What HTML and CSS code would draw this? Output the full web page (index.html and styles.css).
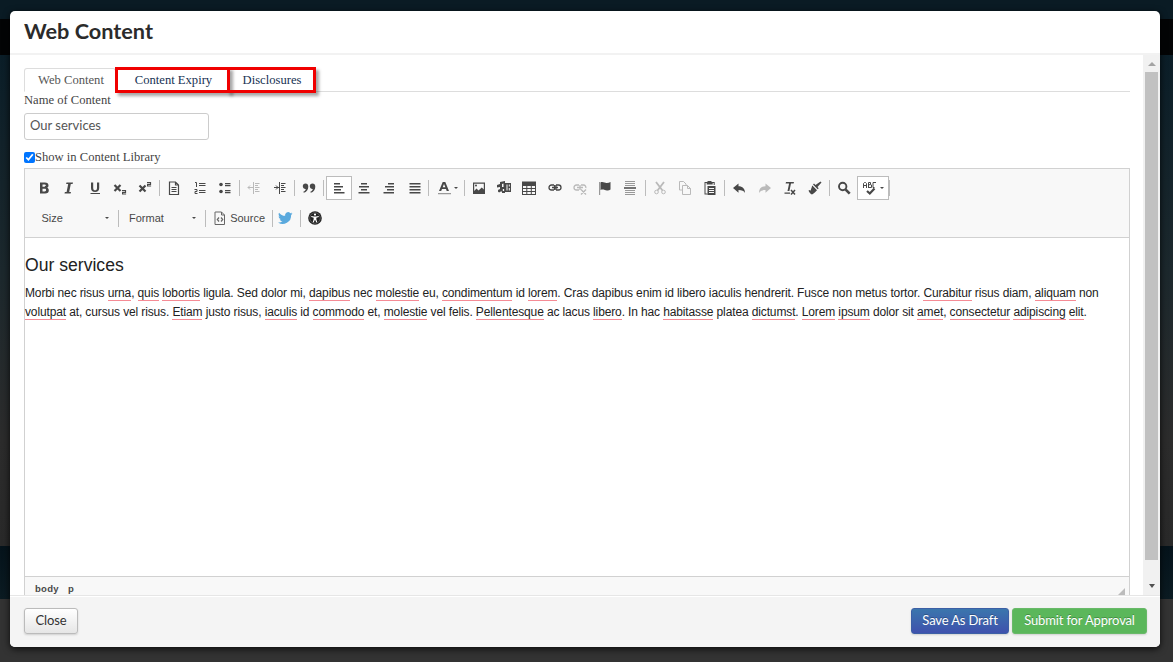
FILE: index.html
```html
<!DOCTYPE html>
<html lang="en">
<head>
  <meta charset="UTF-8">
  <meta name="viewport" content="width=device-width, initial-scale=1.0">
  <title>Web Content</title>
  <link rel="stylesheet" href="styles.css">
</head>
<body>
  <div class="modal">
    <div class="modal-header"><h3>Web Content</h3></div>

    <div class="modal-main">
      <div class="modal-body">
        <ul class="tabs">
          <li class="tab active">Web Content</li>
          <li class="tab marked expiry">Content Expiry</li>
          <li class="tab marked disclosures">Disclosures</li>
        </ul>
        <label class="name-label" for="contentName">Name of Content</label>
        <input class="name-input" id="contentName" type="text" value="Our services">
        <label class="library"><input type="checkbox" checked>Show in Content Library</label>

        <div class="editor">
          <div class="toolbar">
            <div class="row">
              <div class="group">
                <span class="btn"><svg viewBox="0 0 16 16"><path fill-rule="evenodd" d="M4 2.500h4.800c2.600 0 3.700 1.100 3.700 2.900 0 1.200-.6 2-1.500 2.300 1.200.3 1.800 1.200 1.800 2.500 0 2.100-1.200 3.300-3.700 3.300H4zm2.500 2v2.300h1.800c1 0 1.500-.4 1.500-1.200s-.5-1.100-1.500-1.100zm0 4.200v2.700h2.100c1 0 1.500-.5 1.500-1.300 0-.9-.5-1.400-1.500-1.400z"/></svg></span>
                <span class="btn"><svg viewBox="0 0 16 16"><path d="M5.500 2.500h6.500l-.4 1.600h-1.800l-1.600 7.800h1.800l-.4 1.600H3.500l.4-1.600h1.700l1.600-7.800H5.100z"/></svg></span>
                <span class="btn"><svg viewBox="0 0 16 16"><path d="M4 2.500h2.200V8c0 1.700.7 2.300 1.900 2.300S10 9.700 10 8V2.500h2.200V8c0 2.800-1.500 4.100-4.100 4.100S4 10.800 4 8zM3.500 13h9.500v1H3.500z"/></svg></span>
                <span class="btn"><svg class="line" viewBox="0 0 16 16"><path stroke-width="2.200" d="M2.500 5l6 6M8.500 5l-6 6"/><path stroke-width="1.200" d="M10 10.500h3.500v1.800H10.600v1.700h3.500"/></svg></span>
                <span class="btn"><svg class="line" viewBox="0 0 16 16"><path stroke-width="2.200" d="M2.500 5.500l6 6M8.500 5.500l-6 6"/><path stroke-width="1.200" d="M10 2.500h3.500v1.800H10.600V6h3.500"/></svg></span>
              </div>
              <div class="group">
                <span class="btn"><svg class="line" viewBox="0 0 16 16"><path stroke-width="1.200" d="M3.500 2h6l3 3v9.500h-9zM9.500 2v3h3"/><path d="M5.500 7.500h5M5.500 9.500h5M5.500 11.500h5"/></svg></span>
                <span class="btn"><svg class="line" viewBox="0 0 16 16"><path d="M3 2.500h1.500V7M2.500 9.500h2.500v2H3v2h2.500"/><path stroke-width="1.200" d="M7 3.500h6.500M7 5.500h6.500M7 10.500h6.500M7 12.500h6.500"/></svg></span>
                <span class="btn"><svg viewBox="0 0 16 16"><circle cx="4" cy="4.500" r="1.800"/><circle cx="4" cy="11.500" r="1.800"/><path d="M8 3h5.500v1.200H8zM8 5h5.500v1.200H8zM8 10h5.500v1.200H8zM8 12h5.500v1.200H8z"/></svg></span>
              </div>
              <div class="group">
                <span class="btn off"><svg class="line" viewBox="0 0 16 16"><path d="M7.500 2v12M9 3.500h4.500M9 5.500h3M9 7.500h4.500M9 9.500h3M9 11.500h4.500M2 7.500h5M4 5.500l-2 2 2 2"/></svg></span>
                <span class="btn"><svg class="line" viewBox="0 0 16 16"><path d="M8.500 2v12M10 3.500h4.500M10 5.500h3M10 7.500h4.500M10 9.500h3M10 11.500h4.500M3 7.500h5M5 5.500l2 2-2 2"/></svg></span>
              </div>
              <div class="group">
                <span class="btn"><svg viewBox="0 0 16 16"><path d="M4.500 3.500c1.700 0 2.800 1.200 2.800 3.200 0 3-1.700 5.200-4.500 6l-.5-1c1.600-.7 2.400-1.600 2.500-2.800C3 9 1.800 7.800 1.800 6.200c0-1.600 1.100-2.700 2.700-2.700zm7 0c1.700 0 2.800 1.200 2.800 3.200 0 3-1.700 5.200-4.500 6l-.5-1c1.600-.7 2.400-1.600 2.500-2.800-1.800.1-3-1.100-3-2.700 0-1.600 1.100-2.700 2.700-2.700z"/></svg></span>
              </div>
              <div class="group align">
                <span class="btn on"><svg viewBox="0 0 16 16"><path d="M3 3h6v1.600H3zM3 6h9v1.600H3zM3 9h7v1.600H3zM3 12h10.500v1.600H3z"/></svg></span>
                <span class="btn"><svg viewBox="0 0 16 16"><path d="M5 3h6v1.600H5zM3 6h10v1.600H3zM5 9h6v1.600H5zM2.500 12h11v1.600h-11z"/></svg></span>
                <span class="btn"><svg viewBox="0 0 16 16"><path d="M7 3h6v1.600H7zM4 6h9v1.600H4zM6 9h7v1.600H6zM2.500 12H13v1.600H2.500z"/></svg></span>
                <span class="btn"><svg viewBox="0 0 16 16"><path d="M2.500 3h11v1.600h-11zM2.500 6h11v1.600h-11zM2.500 9h11v1.600h-11zM2.500 12h11v1.600h-11z"/></svg></span>
              </div>
              <div class="group">
                <span class="btn wide"><svg viewBox="0 0 16 16"><path fill-rule="evenodd" d="M6.700 2h2.600l3.700 9h-2.300L10 9H6l-.8 2H3zM6.700 7.300h2.700L8 4z"/><path class="soft" d="M2 13h13v1.200H2z"/></svg><i class="caret"></i></span>
              </div>
              <div class="group">
                <span class="btn"><svg viewBox="0 0 16 16"><path fill-rule="evenodd" d="M2 2.500h12v11.500H2zm1.200 1.200v7.300l2.300-2.500 2 2 3.300-3 2 2V3.700z"/><circle cx="5" cy="5.600" r="1"/></svg></span>
                <span class="btn"><svg viewBox="0 0 16 16"><path fill-rule="evenodd" d="M4 2l5-1v2h6v9H9v1H6v-1.500H4.500C4 13 1.500 12.500 2 10.500c.2-1 1-1.300 2-1.300V7L1 7.500V5l3-1zM6 4v3h1.500V3.500zm4.500.5v6h1v-6zM6.800 9v2h1.300V9zm6-4.500v2h1v-2zm0 3.500v2.500h1V8z"/></svg></span>
                <span class="btn"><svg viewBox="0 0 16 16"><path fill-rule="evenodd" d="M1 1.500h14V15H1zm1 4.500v2h3.300V6zm4.300 0v2h3.500V6zm4.500 0v2H14V6zM2 9v2h3.300V9zm4.300 0v2h3.500V9zm4.500 0v2H14V9zM2 12v2h3.300v-2zm4.300 0v2h3.500v-2zm4.500 0v2H14v-2z"/></svg></span>
                <span class="btn"><svg class="line" viewBox="0 0 16 16"><path stroke-width="1.300" d="M7 5H4.500a2.500 2.500 0 000 5H7M9 5h2.500a2.500 2.500 0 010 5H9M5 7.500h6M7.500 5v5M9 5v5"/></svg></span>
                <span class="btn off"><svg class="line" viewBox="0 0 16 16"><path stroke-width="1.300" d="M7 5H4.500a2.500 2.500 0 000 5H7M9 5h2.500a2.500 2.500 0 012.300 3M5 7.500h6M8 5v5M9 9.500l5 5M14 9.500l-5 5"/></svg></span>
                <span class="btn"><svg viewBox="0 0 16 16"><path class="soft" d="M2 2h1.200v13H2z"/><path d="M3.500 2.500c2.500-1.200 4.500.8 6.300.6 1.300-.1 2.700-.6 3.700-1.100v7.500c-1 .8-2.300 1.200-3.600 1-2-.3-3.900-1.600-6.400-.5z"/></svg></span>
                <span class="btn"><svg viewBox="0 0 16 16"><path class="soft" d="M3 1h10v1H3zM3 3h10v1H3zM3 5h10v1H3zM3 10h10v1H3zM3 12h10v1H3zM3 14h10v1H3z"/><path d="M2 7.200h12v1.600H2z"/></svg></span>
              </div>
              <div class="group">
                <span class="btn off"><svg class="line" viewBox="0 0 16 16"><path stroke-width="1.800" d="M4 2l6.500 8.500M12 2l-6.500 8.500"/><circle cx="4.500" cy="12" r="1.800"/><circle cx="11.500" cy="12" r="1.800"/></svg></span>
                <span class="btn off"><svg class="line" viewBox="0 0 16 16"><path d="M5 10H2.500V1.500h4L9 4v1M5.500 5.500h5l3 3v6h-8zM10.500 5.500v3h3"/></svg></span>
                <span class="btn"><svg viewBox="0 0 16 16"><path d="M2.500 2h3V1h4v1h3.200v3h-1V3h-1v1.500h-6V3h-1.200v10.500H5.500v1h-3z"/><path fill-rule="evenodd" d="M5.500 6H13.500v9h-8zm1.500 2v1h5V8zm0 2v1h5v-1zm0 2v1h5v-1z"/></svg></span>
              </div>
              <div class="group">
                <span class="btn"><svg viewBox="0 0 16 16"><path d="M2 8l5.500-4.500v2.700c4 0 6.500 2.300 6.500 6.800-1.200-2-3-2.900-6.500-2.900v2.700z"/></svg></span>
                <span class="btn off"><svg viewBox="0 0 16 16"><path d="M14 8L8.500 3.500v2.700C4.500 6.200 2 8.500 2 13c1.200-2 3-2.900 6.500-2.900v2.700z"/></svg></span>
                <span class="btn"><svg viewBox="0 0 16 16"><path d="M4 2h8l-.4 1.600H9L7.400 11H5.500l1.600-7.400H3.600zM2.500 12.500H8v1.300H2.500z"/><path class="stroke" d="M9 10l4 4.500M13 10l-4 4.500"/></svg></span>
                <span class="btn"><svg viewBox="0 0 16 16"><path d="M13.500 1.500l1 1-4 4.500 1.200 1.200-1 1-4.700-4.700 1-1L8.500 5zM5.300 5.500l4.700 4.700C8.500 11.500 6.500 14 5 14.500c-1.300-.5-3-2.500-3.500-4l1.500-.5.8.8.2-1.800c.5-.5.700-2 1.300-3.500z"/></svg></span>
              </div>
              <div class="group last">
                <span class="btn"><svg class="line" viewBox="0 0 16 16"><circle cx="6.700" cy="6.500" r="3.700" stroke-width="1.900"/><path stroke-width="2.600" d="M9.700 9.700l4 4"/></svg></span>
                <span class="btn on spell"><svg class="line" viewBox="0 0 16 16"><path d="M1.500 8V3.500l1-1h1l1 1V8M1.500 5.500h3M6.500 8V2.500h2v2.200h-2M9.500 4.700V7.500h-3M14 2.500h-3V7.500H12.500"/><path stroke-width="2.200" d="M5 11l2.800 2.500L12.500 8.500"/></svg><i class="caret"></i></span>
              </div>
            </div>
            <div class="row">
              <div class="combo">Size<i class="caret"></i></div>
              <div class="combo format">Format<i class="caret"></i></div>
              <div class="source"><svg class="line thin" viewBox="0 0 16 16"><path d="M3.500 2h6l3 3v9.500h-9.500V2zM9.500 2v3h3"/><path stroke-width="1.200" d="M7 7.500L5.300 9.500 7 11.500M9 7.500l1.700 2-1.700 2"/></svg>Source</div>
              <div class="twitter"><svg viewBox="0 0 16 16"><path d="M15.500 3.200a6 6 0 01-1.800.5c.7-.4 1.100-1 1.400-1.700-.6.4-1.300.6-2 .8a3.200 3.200 0 00-5.500 2.900C5 5.600 2.700 4.300 1.100 2.300c-.9 1.500-.4 3.300 1 4.200-.5 0-1-.1-1.400-.4 0 1.600 1.100 2.900 2.600 3.200-.5.100-1 .1-1.500 0 .4 1.300 1.600 2.200 3 2.200A6.400 6.400 0 010 12.800 9 9 0 0014 4.800c.6-.4 1.100-1 1.500-1.600z"/></svg></div>
              <div class="access"><svg viewBox="0 0 16 16"><circle cx="8" cy="8" r="6.800"/><circle class="ring" cx="8" cy="8" r="5.300"/><circle class="white" cx="8" cy="4.600" r="1.100"/><path class="white" d="M4.300 6l2.700.4h2l2.700-.4.1 1-2.500.7.1 1.800.9 2.700-1 .3L8.200 10h-.4l-1.100 2.500-1-.3.9-2.700.1-1.800-2.500-.7z"/></svg></div>
            </div>
          </div>

          <div class="content">
            <h2>Our services</h2>
            <p>Morbi nec risus <u>urna</u>, <u>quis</u> <u>lobortis</u> ligula. Sed dolor mi, <u>dapibus</u> nec <u>molestie</u> eu, <u>condimentum</u> id <u>lorem</u>. Cras dapibus enim id libero iaculis hendrerit. Fusce non metus tortor. <u>Curabitur</u> risus diam, <u>aliquam</u> non<br><u>volutpat</u> at, cursus vel risus. <u>Etiam</u> justo risus, <u>iaculis</u> id <u>commodo</u> et, <u>molestie</u> vel felis. <u>Pellentesque</u> ac lacus <u>libero</u>. In hac <u>habitasse</u> platea <u>dictumst</u>. <u>Lorem</u> <u>ipsum</u> dolor sit <u>amet</u>, <u>consectetur</u> <u>adipiscing</u> <u>elit</u>.</p>
          </div>
          <div class="path"><span>body</span><span>p</span><i class="resizer"></i></div>
        </div>
      </div>
      <div class="scrollbar"><i class="up"></i><div class="thumb"></div><i class="down"></i></div>
    </div>

    <div class="modal-footer">
      <button class="button close">Close</button>
      <button class="button draft">Save As Draft</button>
      <button class="button submit">Submit for Approval</button>
    </div>
  </div>
</body>
</html>
```
FILE: styles.css
```css
* {
  box-sizing: border-box;
}

body {
  margin: 0;
  height: 662px;
  overflow: hidden;
  padding: 11px 13px 15px 10px;
  background: linear-gradient(#0a1b24 19px, #030405 19px, #030405 55px, #0b1e28 55px, #1c282d 270px, #2c2c2c 440px, #292929 546px, #05131b 546px, #0b1b22 599px, #333 599px);
}

.modal {
  display: flex;
  flex-direction: column;
  width: 1150px;
  height: 636px;
  overflow: hidden;
  background-color: #fff;
  border-radius: 5px;
  box-shadow: 0 2px 7px rgba(0, 0, 0, 0.8);
}

.modal-header {
  height: 44px;
  flex: none;
  padding: 0 14px;
  border-bottom: 2px solid #f2f2f2;
}

h3 {
  margin: 0;
  font: bold 21.7px/40px Lato, sans-serif;
  color: #2b2b2b;
}

.modal-main {
  display: flex;
  flex: none;
  height: 540px;
  overflow: hidden;
}

.modal-body {
  flex: 1;
  padding: 13px 13px 0 14px;
  font: 12.6px "Liberation Serif", serif;
  color: #444;
}

.tabs {
  display: flex;
  height: 24px;
  margin: 0;
  padding: 0;
  list-style: none;
  border-bottom: 1px solid #ddd;
}

.tab {
  height: 24px;
  line-height: 23px;
  text-align: center;
  color: #163152;
}

.tab.active {
  width: 92px;
  padding-left: 2px;
  border: 1px solid #ddd;
  border-bottom-color: #fff;
  border-radius: 3px 3px 0 0;
  color: #555;
}

.tab.marked {
  height: 26px;
  margin-top: -1px;
  line-height: 21px;
  border: 3px solid #f00000;
  box-shadow: 3px 3px 3px rgba(0, 0, 0, 0.35);
}

.expiry {
  width: 115px;
  margin-left: -1px;
  padding-left: 2px;
}

.disclosures {
  width: 89px;
  margin-left: -3px;
  padding-left: 1px;
}

.name-label {
  display: block;
  height: 21px;
  line-height: 17px;
}

.name-input {
  display: block;
  width: 185px;
  height: 27px;
  padding: 0 5px 3px;
  border: 1px solid #ccc;
  border-radius: 3px;
  font: 13px Lato, sans-serif;
  color: #555;
}

.library {
  display: flex;
  align-items: center;
  height: 28px;
  padding-top: 6px;
}

.library input {
  width: 11px;
  height: 11px;
  margin: 1px 0 0;
}

.editor {
  height: 440px;
  border: 1px solid #d1d1d1;
  font-family: "Liberation Sans", sans-serif;
}

.toolbar {
  height: 69px;
  padding: 4px 5px 0;
  background-color: #f8f8f8;
  border-bottom: 1px solid #d1d1d1;
}

.row {
  display: flex;
  height: 30px;
  align-items: center;
}

.group {
  display: flex;
  align-items: center;
  position: relative;
  padding: 0 1.5px;
  border-right: 1px solid transparent;
}

/* short separator at the end of each group */
.group::after {
  content: "";
  position: absolute;
  right: -1px;
  width: 1px;
  height: 16px;
  background-color: #bcbcbc;
}

.align {
  padding-left: 2.5px;
  padding-right: 1px;
}

.btn {
  display: flex;
  align-items: center;
  justify-content: center;
  width: 25.25px;
  height: 24px;
}

.btn.on {
  background-color: #fff;
  border: 1px solid #bcbcbc;
}

.btn.wide {
  width: 31.5px;
}

.btn.spell {
  width: 31.5px;
}

.group.last {
  padding-right: 0;
}

svg {
  width: 16px;
  height: 16px;
  flex: none;
  fill: #484848;
}

.line,
.stroke {
  fill: none;
  stroke: #484848;
}

.stroke {
  stroke-width: 1.5;
}

.thin {
  stroke: #666;
}

.soft {
  fill: #999;
}

.white {
  fill: #fff;
}

.ring {
  fill: none;
  stroke: #888;
  stroke-width: 0.5;
}

.off {
  opacity: 0.35;
}

.caret {
  margin-left: 2px;
  border: 2px solid transparent;
  border-top: 2.5px solid #484848;
  border-bottom: 0;
}

.combo,
.source {
  display: flex;
  align-items: center;
  justify-content: space-between;
  width: 89px;
  height: 17px;
  padding: 0 9px 0 11.5px;
  border-right: 1px solid #bcbcbc;
  font-size: 11px;
  color: #484848;
}

.format {
  width: 87px;
  padding-left: 10px;
}

.source {
  width: 67px;
  padding: 0 7px 0 6px;
}

.twitter,
.access {
  display: flex;
  align-items: center;
  width: 28px;
  height: 17px;
  padding-left: 5px;
  border-right: 1px solid #bcbcbc;
}

.twitter svg {
  width: 15px;
  fill: #5aa9dd;
}

.access {
  padding-left: 6px;
  border: 0;
}

.access svg {
  fill: #222;
}

.content {
  height: 338px;
  padding-top: 15px;
  color: #222;
}

.content h2 {
  margin: 0 0 7px;
  font-size: 17.6px;
  font-weight: normal;
  line-height: 24px;
}

.content p {
  margin: 0;
  font-size: 12px;
  letter-spacing: -0.13px;
  line-height: 19px;
  white-space: nowrap;
}

.content u {
  text-decoration: none;
  border-bottom: 1px solid #f58b95;
}

.path {
  display: flex;
  position: relative;
  gap: 9px;
  height: 32px;
  padding: 6px 10px;
  background-color: #f8f8f8;
  border-top: 1px solid #d1d1d1;
  font-size: 9.5px;
  font-weight: bold;
  letter-spacing: 0.3px;
  color: #484848;
}

.resizer {
  position: absolute;
  right: 4px;
  top: 11px;
  border: 4px solid #bcbcbc;
  border-top-color: transparent;
  border-left-color: transparent;
}

.scrollbar {
  display: flex;
  flex-direction: column;
  align-items: center;
  width: 17px;
  padding: 7px 0;
  background-color: #f1f1f1;
}

.up,
.down {
  border: 4px solid transparent;
  border-top: 0;
  border-bottom-color: #a3a3a3;
}

.down {
  margin-top: 24px;
  border-width: 4px 3px 0;
  border-top: 4px solid #505050;
}

.thumb {
  width: 13px;
  height: 488px;
  margin-top: 6px;
  background-color: #c1c1c1;
}

.modal-footer {
  display: flex;
  flex: 1;
  align-items: flex-start;
  gap: 3px;
  padding: 12px 13px 0 14px;
  background-color: #f4f4f4;
  border-top: 1px solid #e6e6e6;
  box-shadow: inset 0 1px #fff;
}

.button {
  height: 26px;
  padding: 0 0 3px;
  border: 1px solid #bbb;
  border-radius: 3px;
  font: 13px Lato, sans-serif;
  letter-spacing: -0.15px;
  color: #fff;
  text-shadow: 0 -1px rgba(0, 0, 0, 0.25);
  box-shadow: 0 1px 2px rgba(0, 0, 0, 0.15);
}

.close {
  width: 54px;
  margin-right: auto;
  background: linear-gradient(#fff, #e6e6e6);
  color: #333;
  text-shadow: none;
}

.draft {
  width: 98px;
  background: linear-gradient(#3b76ad, #3f51ad);
  border-color: #3c5fa5;
}

.submit {
  width: 135px;
  background-color: #5bb75b;
  border-color: #68b968;
}
```
